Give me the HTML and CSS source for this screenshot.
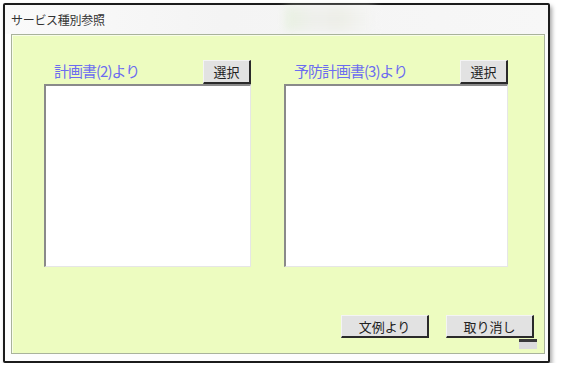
FILE: index.html
```html
<!DOCTYPE html>
<html>
<head>
	<meta charset="utf-8">
	<title>サービス種別参照</title>
	<link rel="stylesheet" href="styles.css">
</head>
<body>

<div class="window">
	<div class="title-bar">
		<span class="title">サービス種別参照</span>
		<span class="title-blur"></span>
	</div>

	<div class="panel">
		<div class="columns">
			<div class="column col-left">
				<div class="column-head">
					<span class="column-label">計画書(2)より</span>
					<span class="btn btn-small">選択</span>
				</div>
				<div class="list-box"></div>
			</div>
			<div class="column col-right">
				<div class="column-head">
					<span class="column-label">予防計画書(3)より</span>
					<span class="btn btn-small">選択</span>
				</div>
				<div class="list-box"></div>
			</div>
		</div>

		<div class="footer">
			<span class="btn btn-wide">文例より</span>
			<span class="btn btn-wide">取り消し</span>
		</div>
		<span class="grip"></span>
	</div>
</div>

</body>
</html>
```

FILE: styles.css
```css
* {
	box-sizing: border-box;
}

body {
	margin: 0;
	background: #fff;
	font-family: "Noto Sans CJK JP", "Noto Sans", sans-serif;
}

/* Dialog frame */
.window {
	margin: 3px 0 0 3px;
	width: 547px;
	height: 360px;
	border: 2px solid #1c1c1c;
	border-radius: 2px;
	background: #fdfdfd;
	box-shadow: 2px 3px 4px rgba(0, 0, 0, 0.35);
	display: flex;
	flex-direction: column;
}

.title-bar {
	position: relative;
	height: 29px;
	display: flex;
	align-items: center;
	padding-left: 6px;
	background: linear-gradient(to right, #fafafa 0%, #f4f4f4 40%, #f7f7f7 100%);
}

.title {
	font-size: 12px;
	color: #333;
	letter-spacing: -0.3px;
}

/* blurred desktop leaking through the title glass */
.title-blur {
	position: absolute;
	left: 280px;
	top: 2px;
	width: 90px;
	height: 24px;
	background: linear-gradient(to right, #e4f0da, #ededea 35%, #eaece2 60%, #f6f6f6);
	filter: blur(4px);
	opacity: 0.7;
}

/* Green content panel */
.panel {
	position: relative;
	flex: 1;
	margin: 0 3px 7px 6px;
	background: #edfcc0;
	border: 1px solid #a9b39b;
	box-shadow: inset 1px 1px 0 #f8fde9;
	padding: 24px 10px 0 32px;
	display: flex;
	flex-direction: column;
}

.columns {
	display: flex;
	gap: 33px;
}

.col-left {
	width: 207px;
}

.col-right {
	width: 224px;
}

.column-head {
	height: 25px;
	display: flex;
	justify-content: space-between;
	align-items: center;
}

.column-label {
	padding-left: 10px;
	padding-bottom: 3px;
	font-size: 15px;
	color: #6c6cf0;
	letter-spacing: -1px;
}

.list-box {
	height: 183px;
	background: #fff;
	border-top: 2px solid #8a8a8a;
	border-left: 2px solid #8a8a8a;
	border-right: 1px solid #e6e6e6;
	border-bottom: 1px solid #e6e6e6;
}

/* Buttons */
.btn {
	display: flex;
	align-items: center;
	justify-content: center;
	background: #e2e2e2;
	border-top: 1px solid #f4f4f4;
	border-left: 1px solid #f4f4f4;
	border-right: 2px solid #2a2a2a;
	border-bottom: 2px solid #2a2a2a;
	font-size: 13px;
	color: #222;
}

.btn-small {
	width: 48px;
	height: 24px;
}

.btn-wide {
	width: 88px;
	height: 23px;
}

.footer {
	margin-top: auto;
	margin-bottom: 15px;
	display: flex;
	justify-content: flex-end;
	gap: 17px;
}

/* size grip under the last button */
.grip {
	position: absolute;
	right: 7px;
	bottom: 4px;
	width: 18px;
	height: 10px;
	border-top: 3px solid #3a3a3a;
	background: #dcdcdc;
}
```
